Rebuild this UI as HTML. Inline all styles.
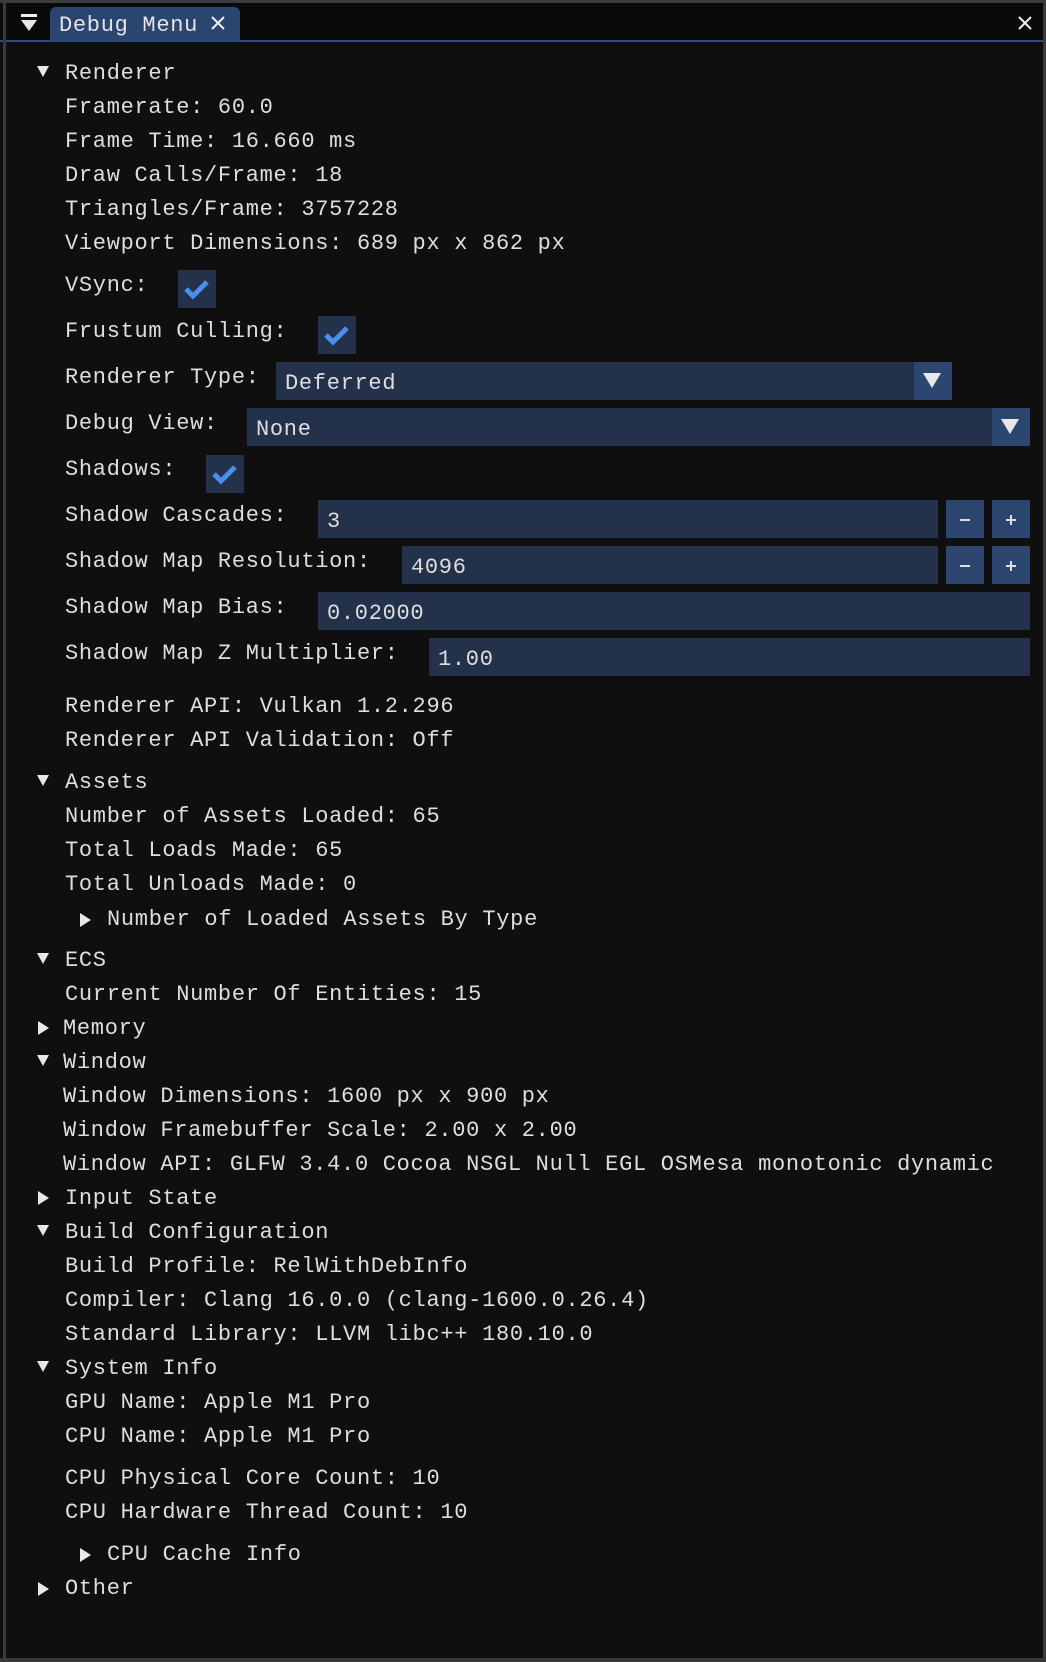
<!DOCTYPE html>
<html><head><meta charset="utf-8"><style>
*{margin:0;padding:0;box-sizing:border-box}
body{width:1046px;height:1662px;background:#0f0f0f;position:relative;overflow:hidden;font-family:"Liberation Mono",monospace;font-size:22px;letter-spacing:0.7px;color:#dedede}
.t{position:absolute;line-height:26px;white-space:pre;transform:translateY(2px)}
.b{position:absolute}
.in{position:absolute;background:#23314a}
.btn{position:absolute;background:#2c4670}
.tri{position:absolute;width:0;height:0}
.down{border-left:6.5px solid transparent;border-right:6.5px solid transparent;border-top:11px solid #e8e8e8}
.right{border-top:7px solid transparent;border-bottom:7px solid transparent;border-left:11px solid #e8e8e8;transform:translateY(1px)}
</style></head><body>
<div class="b" style="left:0;top:0;width:1046px;height:41px;background:#0a0a0a"></div>
<div class="b" style="left:0;top:0;width:1046px;height:3px;background:#3c3c3e"></div>
<div class="b" style="left:0;top:40px;width:1046px;height:2px;background:#2d4e78"></div>
<div class="b" style="left:3px;top:0;width:3px;height:1662px;background:#3a3a3c"></div>
<div class="b" style="left:1043px;top:0;width:3px;height:1662px;background:#3a3a3c"></div>
<div class="b" style="left:0;top:1658px;width:1046px;height:4px;background:#3a3a3c"></div>
<div class="b" style="left:21px;top:14px;width:16px;height:3px;background:#eee"></div>
<div class="tri down" style="left:21px;top:20px;border-left-width:8px;border-right-width:8px;border-top-width:11px"></div>
<div class="b" style="left:50px;top:7px;width:190px;height:34px;background:#2a4570;border-radius:6px 6px 0 0"></div>
<div class="t" style="left:59px;top:11px;color:#e4e4e4">Debug Menu</div>
<svg class="b" style="left:210px;top:15px" width="16" height="16"><path d="M2 2L14 14M14 2L2 14" stroke="#eee" stroke-width="2"/></svg>
<svg class="b" style="left:1017px;top:15px" width="16" height="16"><path d="M2 2L14 14M14 2L2 14" stroke="#eee" stroke-width="2"/></svg>

<div class="tri down" style="left:37px;top:66px"></div>
<div class="t" style="left:65px;top:59px">Renderer</div>
<div class="t" style="left:65px;top:93px">Framerate: 60.0</div>
<div class="t" style="left:65px;top:127px">Frame Time: 16.660 ms</div>
<div class="t" style="left:65px;top:161px">Draw Calls/Frame: 18</div>
<div class="t" style="left:65px;top:195px">Triangles/Frame: 3757228</div>
<div class="t" style="left:65px;top:229px">Viewport Dimensions: 689 px x 862 px</div>

<div class="t" style="left:65px;top:271px">VSync:</div>
<div class="in" style="left:178px;top:270px;width:38px;height:38px"></div>
<svg class="b" style="left:178px;top:270px" width="38" height="38"><path d="M8 19L15 26L29 12" stroke="#4a8ef0" stroke-width="5" fill="none"/></svg>
<div class="t" style="left:65px;top:317px">Frustum Culling:</div>
<div class="in" style="left:318px;top:316px;width:38px;height:38px"></div>
<svg class="b" style="left:318px;top:316px" width="38" height="38"><path d="M8 19L15 26L29 12" stroke="#4a8ef0" stroke-width="5" fill="none"/></svg>

<div class="t" style="left:65px;top:363px">Renderer Type:</div>
<div class="in" style="left:276px;top:362px;width:638px;height:38px"></div>
<div class="btn" style="left:914px;top:362px;width:38px;height:38px"></div>
<div class="tri down" style="left:923px;top:373px;border-left-width:9.5px;border-right-width:9.5px;border-top-width:15px"></div>
<div class="t" style="left:285px;top:369px">Deferred</div>

<div class="t" style="left:65px;top:409px">Debug View:</div>
<div class="in" style="left:247px;top:408px;width:745px;height:38px"></div>
<div class="btn" style="left:992px;top:408px;width:38px;height:38px"></div>
<div class="tri down" style="left:1001px;top:419px;border-left-width:9.5px;border-right-width:9.5px;border-top-width:15px"></div>
<div class="t" style="left:256px;top:415px">None</div>

<div class="t" style="left:65px;top:455px">Shadows:</div>
<div class="in" style="left:206px;top:455px;width:38px;height:38px"></div>
<svg class="b" style="left:206px;top:455px" width="38" height="38"><path d="M8 19L15 26L29 12" stroke="#4a8ef0" stroke-width="5" fill="none"/></svg>

<div class="t" style="left:65px;top:501px">Shadow Cascades:</div>
<div class="in" style="left:318px;top:500px;width:620px;height:38px"></div>
<div class="t" style="left:327px;top:507px">3</div>
<div class="btn" style="left:946px;top:500px;width:38px;height:38px"></div>
<div class="btn" style="left:992px;top:500px;width:38px;height:38px"></div>
<div class="b" style="left:960px;top:519px;width:10px;height:2px;background:#ddd"></div>
<div class="b" style="left:1006px;top:519px;width:10px;height:2px;background:#ddd"></div>
<div class="b" style="left:1010px;top:515px;width:2px;height:10px;background:#ddd"></div>

<div class="t" style="left:65px;top:547px">Shadow Map Resolution:</div>
<div class="in" style="left:402px;top:546px;width:536px;height:38px"></div>
<div class="t" style="left:411px;top:553px">4096</div>
<div class="btn" style="left:946px;top:546px;width:38px;height:38px"></div>
<div class="btn" style="left:992px;top:546px;width:38px;height:38px"></div>
<div class="b" style="left:960px;top:565px;width:10px;height:2px;background:#ddd"></div>
<div class="b" style="left:1006px;top:565px;width:10px;height:2px;background:#ddd"></div>
<div class="b" style="left:1010px;top:561px;width:2px;height:10px;background:#ddd"></div>

<div class="t" style="left:65px;top:593px">Shadow Map Bias:</div>
<div class="in" style="left:318px;top:592px;width:712px;height:38px"></div>
<div class="t" style="left:327px;top:599px">0.02000</div>

<div class="t" style="left:65px;top:639px">Shadow Map Z Multiplier:</div>
<div class="in" style="left:429px;top:638px;width:601px;height:38px"></div>
<div class="t" style="left:438px;top:645px">1.00</div>

<div class="t" style="left:65px;top:692px">Renderer API: Vulkan 1.2.296</div>
<div class="t" style="left:65px;top:726px">Renderer API Validation: Off</div>

<div class="tri down" style="left:37px;top:775px"></div>
<div class="t" style="left:65px;top:768px">Assets</div>
<div class="t" style="left:65px;top:802px">Number of Assets Loaded: 65</div>
<div class="t" style="left:65px;top:836px">Total Loads Made: 65</div>
<div class="t" style="left:65px;top:870px">Total Unloads Made: 0</div>
<div class="tri right" style="left:80px;top:912px"></div>
<div class="t" style="left:107px;top:905px">Number of Loaded Assets By Type</div>

<div class="tri down" style="left:37px;top:953px"></div>
<div class="t" style="left:65px;top:946px">ECS</div>
<div class="t" style="left:65px;top:980px">Current Number Of Entities: 15</div>
<div class="tri right" style="left:38px;top:1020px"></div>
<div class="t" style="left:63px;top:1014px">Memory</div>
<div class="tri down" style="left:37px;top:1055px"></div>
<div class="t" style="left:63px;top:1048px">Window</div>
<div class="t" style="left:63px;top:1082px">Window Dimensions: 1600 px x 900 px</div>
<div class="t" style="left:63px;top:1116px">Window Framebuffer Scale: 2.00 x 2.00</div>
<div class="t" style="left:63px;top:1150px">Window API: GLFW 3.4.0 Cocoa NSGL Null EGL OSMesa monotonic dynamic</div>
<div class="tri right" style="left:38px;top:1190px"></div>
<div class="t" style="left:65px;top:1184px">Input State</div>
<div class="tri down" style="left:37px;top:1225px"></div>
<div class="t" style="left:65px;top:1218px">Build Configuration</div>
<div class="t" style="left:65px;top:1252px">Build Profile: RelWithDebInfo</div>
<div class="t" style="left:65px;top:1286px">Compiler: Clang 16.0.0 (clang-1600.0.26.4)</div>
<div class="t" style="left:65px;top:1320px">Standard Library: LLVM libc++ 180.10.0</div>
<div class="tri down" style="left:37px;top:1361px"></div>
<div class="t" style="left:65px;top:1354px">System Info</div>
<div class="t" style="left:65px;top:1388px">GPU Name: Apple M1 Pro</div>
<div class="t" style="left:65px;top:1422px">CPU Name: Apple M1 Pro</div>
<div class="t" style="left:65px;top:1464px">CPU Physical Core Count: 10</div>
<div class="t" style="left:65px;top:1498px">CPU Hardware Thread Count: 10</div>
<div class="tri right" style="left:80px;top:1547px"></div>
<div class="t" style="left:107px;top:1540px">CPU Cache Info</div>
<div class="tri right" style="left:38px;top:1581px"></div>
<div class="t" style="left:65px;top:1574px">Other</div>
</body></html>
